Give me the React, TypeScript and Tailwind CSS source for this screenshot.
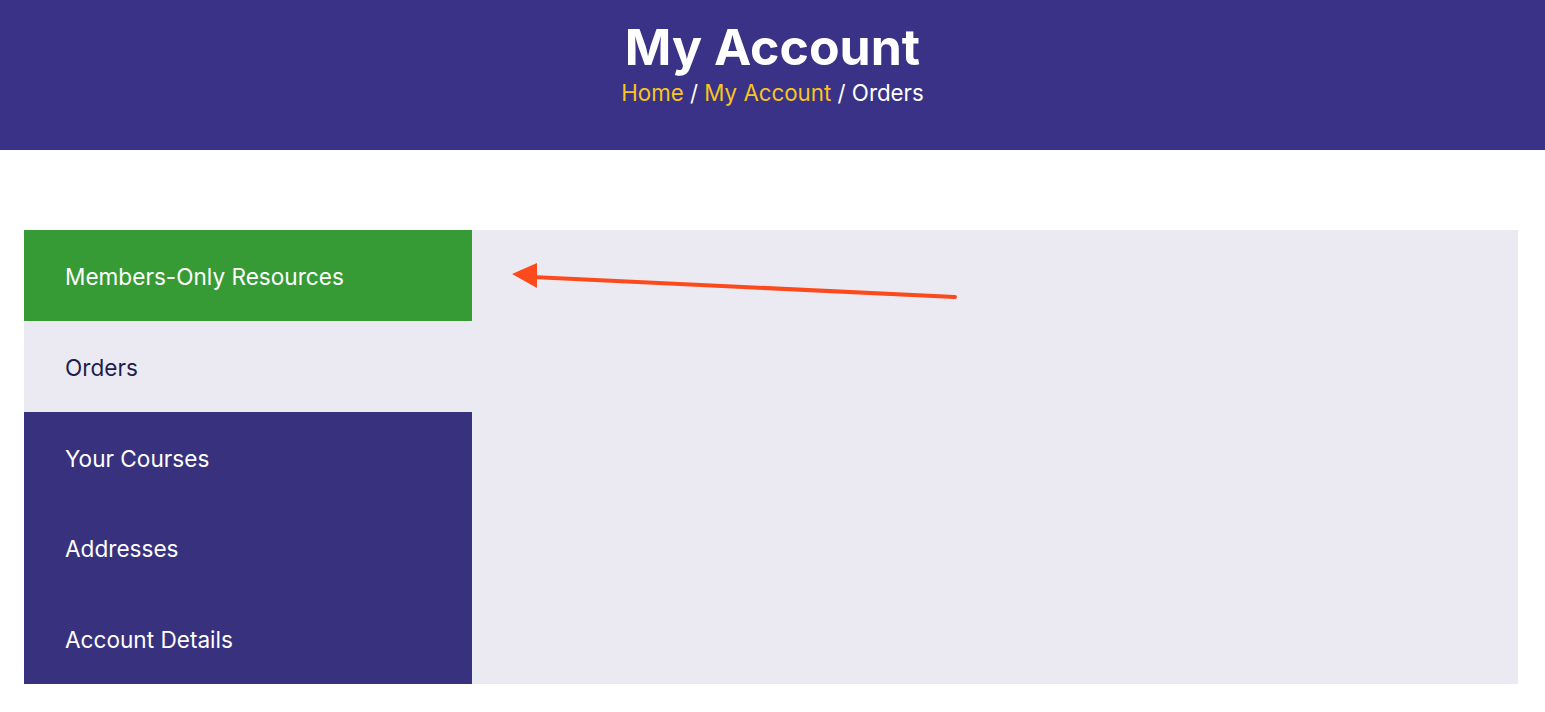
const menu = [
  { label: "Members-Only Resources", tone: "bg-[#369b35] text-white" },
  { label: "Orders", tone: "bg-[#ebeaf2] text-[#1f1d4d]" },
  { label: "Your Courses", tone: "bg-[#37317e] text-white" },
  { label: "Addresses", tone: "bg-[#37317e] text-white" },
  { label: "Account Details", tone: "bg-[#37317e] text-white" },
];

const App = () => {
  return (
    <div className="min-h-screen bg-white font-['Inter','Liberation_Sans',sans-serif]">
      <header className="h-[150px] bg-[#393287] pt-[16px] text-center">
        <h1 className="text-[50px] font-bold leading-[62px] text-white">My Account</h1>
        <p className="text-[22.3px] leading-[29px] text-white">
          <span className="text-[#f7c51e]">Home</span> /{" "}
          <span className="text-[#f7c51e]">My Account</span> / Orders
        </p>
      </header>

      <section className="mx-[24px] mt-[80px] flex w-[1494px] bg-[#ebeaf2]">
        <nav className="flex w-[448px] flex-col">
          {menu.map((item) => (
            <div
              key={item.label}
              className={`flex h-[90.8px] items-center pl-[41px] pt-[3px] text-[22.6px] ${item.tone}`}
            >
              {item.label}
            </div>
          ))}
        </nav>

        <div className="relative flex-1">
          {/* annotation arrow */}
          <svg
            className="absolute left-0 top-0"
            width="520"
            height="120"
            viewBox="0 0 520 120"
          >
            <line x1="483" y1="67" x2="60" y2="47" stroke="#fc4a1c" strokeWidth="4" strokeLinecap="round" />
            <polygon points="40,44 65,33 65,58" fill="#fc4a1c" />
          </svg>
        </div>
      </section>
    </div>
  );
};

export default App;
